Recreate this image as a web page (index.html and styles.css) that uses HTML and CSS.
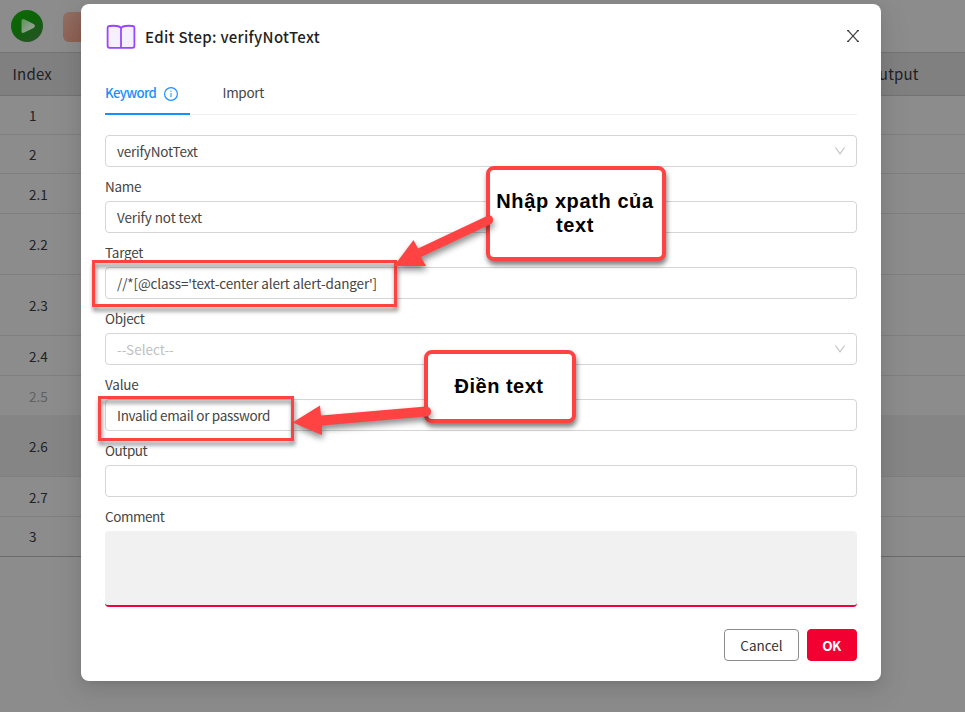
FILE: index.html
```html
<!DOCTYPE html>
<html lang="vi">
<head>
<meta charset="utf-8">
<title>Edit Step</title>
<link rel="stylesheet" href="styles.css">
</head>
<body>
<main class="page">
  <header class="toolbar">
    <svg class="play" width="32" height="32" viewBox="0 0 32 32"><defs><linearGradient id="pg" x1="0" y1="0" x2="0.7" y2="1"><stop offset="0" stop-color="#0c6b05"/><stop offset=".5" stop-color="#0c6308"/><stop offset="1" stop-color="#275226"/></linearGradient><linearGradient id="pt" x1="0" y1="0" x2="1" y2="1"><stop offset="0" stop-color="#5c9258"/><stop offset=".6" stop-color="#8c9f8a"/></linearGradient></defs><circle cx="16" cy="16" r="16" fill="url(#pg)"/><path d="M10.500 11q0-3 2.700-1.700l9.400 4.800q2.800 1.900 0 3.800l-9.400 4.700q-2.700 1.400-2.700-1.600z" fill="url(#pt)"/></svg>
    <span class="swatch"></span>
  </header>
  <div class="grid">
    <div class="row head"><span>Index</span><span class="out">Output</span></div>
    <div class="row h39"><span>1</span></div>
    <div class="row h39"><span>2</span></div>
    <div class="row h40"><span>2.1</span></div>
    <div class="row h61"><span>2.2</span></div>
    <div class="row h61"><span>2.3</span></div>
    <div class="row h40"><span>2.4</span></div>
    <div class="row h40 muted"><span>2.5</span></div>
    <div class="row h61 active"><span>2.6</span></div>
    <div class="row h40"><span>2.7</span></div>
    <div class="row last"><span>3</span></div>
  </div>
</main>

<section class="modal">
  <div class="title">
    <svg class="book" width="30" height="26" viewBox="0 0 30 26" fill="#f6effe" stroke="#9747ff" stroke-width="1.8" stroke-linejoin="round"><path d="M15 3.800C13.400 2.200 8.600 1.400 3.300 2Q1.600 2.200 1.600 4v17.800q0 2 2 2H26.400q2 0 2-2V4q0-1.800-1.700-2C21.400 1.400 16.600 2.200 15 3.800z"/><path d="M15 3.800V23"/></svg>
    <h1>Edit Step: verifyNotText</h1>
    <svg class="close" width="12" height="12" viewBox="0 0 12 12" fill="none" stroke="#444" stroke-width="1.300"><path d="M1.100.600L10.900 11.400M10.900.600L1.100 11.400M0 .6H2.200M12 .6H9.800M0 11.400H2.200M12 11.400H9.800"/></svg>
  </div>
  <nav class="tabs">
    <div class="tab on"><span>Keyword</span><svg width="14" height="14" viewBox="0 0 14 14" fill="none" stroke="#1890ff"><circle cx="7" cy="7" r="6.400" stroke-width="1.200"/><path d="M7 6v4.200M7 3.700v1.200"/></svg></div>
    <div class="tab"><span class="t-import">Import</span></div>
  </nav>
  <form class="form">
    <div class="box"><span class="t-kw">verifyNotText</span><svg class="chev" width="10" height="8" viewBox="0 0 10 8"><path d="M.5.500L5 6.700 9.500.500"/></svg></div>
    <label><span class="l-name">Name</span></label>
    <div class="box"><span class="t-name">Verify not text</span></div>
    <label><span class="l-target">Target</span></label>
    <div class="box"><span class="t-xpath">//*[@class='text-center alert alert-danger']</span></div>
    <label><span class="l-object">Object</span></label>
    <div class="box ph"><span class="t-select">--Select--</span><svg class="chev" width="10" height="8" viewBox="0 0 10 8"><path d="M.5.500L5 6.700 9.500.500"/></svg></div>
    <label><span class="l-value">Value</span></label>
    <div class="box"><span class="t-value">Invalid email or password</span></div>
    <label><span class="l-output">Output</span></label>
    <div class="box"></div>
    <label><span class="l-comment">Comment</span></label>
    <div class="area"></div>
    <div class="actions"><button type="button" class="btn">Cancel</button><button type="button" class="btn ok">OK</button></div>
  </form>
</section>

<div class="mark mark-target"></div>
<div class="mark mark-value"></div>
<div class="note note-xpath">Nhập xpath của<br>text</div>
<div class="note note-text">Điền text</div>
<svg class="arrows" width="965" height="712" viewBox="0 0 965 712" fill="#ff4343">
  <path d="M394 266L413.500 240 418 248.500 487 216Q493 214 493 220 493 223 490 224.500L421 257 426 266z"/>
  <path d="M292.500 422.500L320 405.500 321 415.500 426 406.500Q431 407 431 411.500 431 416 426 416.500L322 425.500 322 435z"/>
</svg>
</body>
</html>
```

FILE: styles.css
```css
* { box-sizing: border-box; }
body {
  margin: 0;
  width: 965px;
  height: 712px;
  overflow: hidden;
  background: #8c8c8c;
  color: #454545;
  font: 13.5px/20px "Noto Sans CJK JP", "Noto Sans", sans-serif;
}
.toolbar { height: 52px; padding: 10px 11px; display: flex; gap: 20px; }
.swatch { width: 32px; height: 30px; margin-top: 2px; border-radius: 6px; background: linear-gradient(135deg, #936f64, #8a5a4b); }
.row { display: flex; align-items: center; border-bottom: 1px solid #7f7f7f; padding-left: 29px; color: #202124; }
.row.head { height: 44px; padding-left: 12.5px; background: #808080; border-top: 1px solid #737373; border-bottom-color: #737373; font-size: 15px; letter-spacing: .2px; }
.out { margin-left: 815px; }
.head span:first-child { width: 40px; }
.h39 { height: 39px; }
.h40 { height: 40px; }
.h61 { height: 61px; }
.row.muted { color: #606060; border-bottom-color: #858585; }
.active { background: #858585; }
.row.last { border-bottom: 1px solid #6b6b6b; height: 40px; padding-bottom: 2px; }

.modal {
  position: absolute;
  left: 81px;
  top: 4px;
  width: 800px;
  height: 677px;
  padding: 0 24px;
  background: #fff;
  border-radius: 8px;
  box-shadow: 0 3px 6px -4px rgba(0,0,0,.12), 0 6px 16px rgba(0,0,0,.08), 0 9px 28px 8px rgba(0,0,0,.05);
}
.title { height: 67px; padding: 0 0 2px 1px; display: flex; align-items: center; }
.title h1 { margin: 0 0 0 9px; font-size: 15px; font-weight: 500; letter-spacing: .3px; color: #1f1f1f; }
.close { margin: -1px -2px 0 auto; }
.tabs { height: 44px; display: flex; gap: 32px; border-bottom: 1px solid #f0f0f0; }
.tab { height: 44px; padding-top: 11px; display: flex; gap: 8px; }
.tab svg { margin-top: 5px; }
.on { width: 85px; color: #1890ff; border-bottom: 2px solid #1890ff; }
.on span { padding-top: 1px; font-size: 13.2px; letter-spacing: -.66px; font-weight: 500; }
.t-import { letter-spacing: -.3px; padding-left: .5px; }
.form { margin: 20px 0 0; }
.box { height: 32px; padding: 0 11px; display: flex; align-items: center; justify-content: space-between; border: 1px solid #d5d5d5; border-radius: 4px; }
.ph { color: #bfbfbf; }
.chev { fill: none; stroke: #bfbfbf; stroke-width: 1.1; }
label { display: block; height: 34px; padding-top: 9px; }
.t-kw, .t-xpath { letter-spacing: -.13px; }
.t-kw { letter-spacing: -.2px; }
.t-name { letter-spacing: -.1px; }
.t-select { letter-spacing: 0; }
.t-value, .l-name, .l-object { letter-spacing: -.31px; }
.l-target { letter-spacing: -.22px; }
.l-value { letter-spacing: -.2px; }
.l-output { letter-spacing: -.45px; }
.l-comment { letter-spacing: -.45px; }
.area { height: 76px; background: #f1f1f1; border-bottom: 2px solid #f0003c; border-radius: 4px; }
.actions { display: flex; justify-content: flex-end; gap: 8px; margin-top: 22px; }
.btn { width: 75px; height: 32px; padding: 0; font: inherit; color: #333; background: #fff; border: 1px solid #8c8c8c; border-radius: 4px; }
.ok { width: 50px; padding-right: 1px; background: #f20032; border-color: #f20032; color: #fff; font-weight: 700; letter-spacing: -.5px; }

.mark { position: absolute; border: 3px solid #ff4343; filter: drop-shadow(1px 4px 2px rgba(0,0,0,.5)); }
.mark-target { left: 92px; top: 260px; width: 305px; height: 47px; }
.mark-value { left: 98px; top: 396px; width: 196px; height: 45px; }
.note {
  position: absolute;
  text-align: center;
  background: #fff;
  border: 4px solid #ff4343;
  border-radius: 8px;
  box-shadow: 1px 4px 5px rgba(0,0,0,.5);
  color: #000;
  font: bold 20px/24px "Liberation Sans", Arial, sans-serif;
  letter-spacing: .6px;
}
.note-xpath { left: 486px; top: 166px; width: 180px; height: 95px; padding: 19px 2px 0 0; white-space: nowrap; }
.note-text { left: 424px; top: 350px; width: 152px; height: 73px; padding: 20px 2px 0 0; letter-spacing: .5px; }
.arrows { position: absolute; left: 0; top: 0; filter: drop-shadow(1px 4px 3px rgba(0,0,0,.45)); }
```
